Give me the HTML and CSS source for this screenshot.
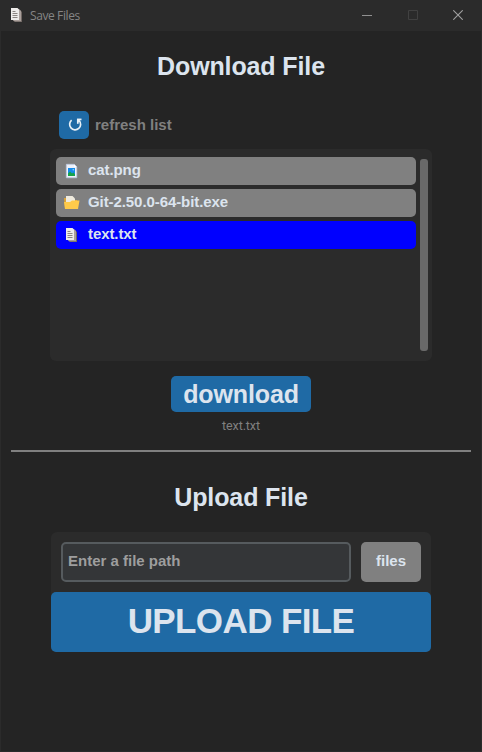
FILE: index.html
```html
<!DOCTYPE html>
<html lang="en">
<head>
<meta charset="utf-8">
<title>Save Files</title>
<link rel="stylesheet" href="styles.css">
</head>
<body>
<svg class="defs" width="0" height="0" aria-hidden="true">
  <symbol id="pages" viewBox="0 0 14 16">
    <path fill="#716864" d="M4 3h6l2 2v10H5l-1-1z"/>
    <path fill="#aaa09c" d="M3 2h6l2 2v10.300H4l-1-1z"/>
    <path fill="#eeecea" d="M1 1h6.500L9 2.500v10.500H1z"/>
    <path stroke="#8b8582" d="M2.500 4.500h3M2.500 6.500h5M2.500 8.500h5M2.500 10.500h5"/>
  </symbol>
</svg>
<div class="window">
  <header class="titlebar">
    <svg class="app-icon" width="14" height="16"><use href="#pages"/></svg>
    <span class="caption">Save Files</span>
    <div class="controls">
      <svg width="10" height="10"><path d="M0 5.500h10" stroke="#909090"/></svg>
      <svg width="10" height="10"><path d="M.5.500h9v9h-9z" fill="none" stroke="#414141"/></svg>
      <svg width="10" height="10"><path d="M.3.300l9.400 9.400M9.700.300L.3 9.700" stroke="#a0a0a0" stroke-width="1.100"/></svg>
    </div>
  </header>
  <main>
    <h1>Download File</h1>
    <div class="refresh">
      <button class="refresh-button" aria-label="refresh">
        <svg width="14" height="14" fill="none" stroke="#e8f0f6" stroke-width="1.700"><path d="M3.600 2.100A5.500 5.500 0 1 0 11.300 2.700"/><path d="M13.500 1.500H9.800v4.200"/><path d="M9 .7h4.500L9 5.700z" fill="#e8f0f6" stroke="none"/></svg>
      </button>
      <span>refresh list</span>
    </div>
    <section class="files">
      <div class="rows">
        <div class="row">
          <svg width="16" height="16"><path fill="#edf1fb" stroke="#b9c5de" stroke-width=".7" d="M2.300 1.300h8l2.500 2.500v11H2.300z"/><path fill="#fff" d="M10 1.500V4h2.700z"/><path fill="#168bea" d="M4 5h7v8H4z"/><path fill="#16a34a" d="M4 10.500l2-2 2 2 1.500-1 1.500 2V13H4z"/><circle cx="9.300" cy="6.700" r=".8" fill="#8bdcff"/></svg>
          <span>cat.png</span>
        </div>
        <div class="row">
          <svg width="16" height="16"><path fill="#dda53b" d="M0 3h4l1 2h8v9H1z"/><path fill="#eeeade" d="M2 1h6.500L11 3.500V12H2z"/><path fill="#ffcb4b" d="M0 7h6l2-1.500h7.500L14 14H1z"/></svg>
          <span>Git-2.50.0-64-bit.exe</span>
        </div>
        <div class="row selected">
          <svg width="16" height="16"><use href="#pages" x="1" width="14" height="16"/></svg>
          <span>text.txt</span>
        </div>
      </div>
      <div class="scrollbar"></div>
    </section>
    <button class="download">download</button>
    <p class="picked">text.txt</p>
    <hr>
    <h2>Upload File</h2>
    <section class="upload">
      <div class="path-row">
        <input type="text" placeholder="Enter a file path">
        <button class="browse">files</button>
      </div>
      <button class="send">UPLOAD FILE</button>
    </section>
  </main>
</div>
</body>
</html>
```
FILE: styles.css
```css
* { box-sizing: border-box; }
body { margin: 0; background: #242424; }
.defs { display: block; height: 0; }
.window {
  height: 752px;
  border: solid #2b2b2b;
  border-width: 0 1px 1px;
  background: #242424;
  color: #dce4ee;
  font: bold 15px/20px "Liberation Sans", Arial, sans-serif;
  overflow: hidden;
}
.titlebar {
  display: flex;
  align-items: center;
  height: 31px;
  margin: 0 -1px;
  padding: 0 19px 0 10px;
  background: #2b2b2b;
}
.app-icon { margin-top: -1px; }
.caption {
  margin-left: 6px;
  color: #858585;
  font: 12px/16px "Open Sans", sans-serif;
  letter-spacing: -.4px;
}
.controls { display: flex; gap: 35.500px; margin-left: auto; }
.controls svg { display: block; margin-top: -1px; }
main { display: flex; flex-direction: column; align-items: center; }
button { padding: 0; border: 0; border-radius: 5px; background: #1f6aa5; color: inherit; font: inherit; }
h1, h2 { margin: 0; font-size: 25px; line-height: 30px; letter-spacing: -.12px; }
h1 { margin-top: 20px; }
h2 { margin-top: 30px; }
.refresh { display: flex; align-items: center; gap: 6px; width: 364px; height: 28px; margin-top: 30px; color: #808080; }
.refresh-button { display: grid; place-items: center; width: 30px; height: 28px; padding-left: 1px; }
.files { display: flex; justify-content: space-between; width: 382px; height: 212px; margin-top: 10px; padding: 8px 4px 8px 6px; border-radius: 6px; background: #2b2b2b; }
.rows { display: flex; flex-direction: column; gap: 4px; width: 360px; }
.row { display: flex; align-items: center; gap: 8px; height: 28px; padding: 0 8px 2px; border-radius: 5px; background: #808080; letter-spacing: -.08px; }
.row svg { margin-top: 1px; }
.row.selected { background: #0000ff; }
.scrollbar { width: 8px; height: 192px; margin-top: 2px; border-radius: 3px; background: #696969; }
.download { width: 140px; height: 36px; margin-top: 15px; font-size: 25px; line-height: 36px; letter-spacing: -.12px; }
.picked { margin: 5px 0 0; color: #808080; font: 12.500px/18px Roboto, sans-serif; letter-spacing: -.1px; }
hr { width: 460px; height: 2px; margin: 15px 0 0; border: 0; background: #808080; }
.upload { width: 380px; margin-top: 20px; border-radius: 6px; background: #2b2b2b; }
.path-row { display: flex; gap: 10px; height: 60px; padding: 10px; }
input { width: 290px; height: 40px; padding: 0 5px 3px; border: 2px solid #565b5e; border-radius: 5px; background: #343638; color: #dce4ee; font: inherit; }
input::placeholder { color: #9e9e9e; opacity: 1; }
.browse { width: 60px; height: 40px; padding-bottom: 2px; background: #808080; }
.send { display: block; width: 380px; height: 60px; padding-bottom: 2px; font-size: 35px; line-height: 40px; letter-spacing: -.6px; }
```
